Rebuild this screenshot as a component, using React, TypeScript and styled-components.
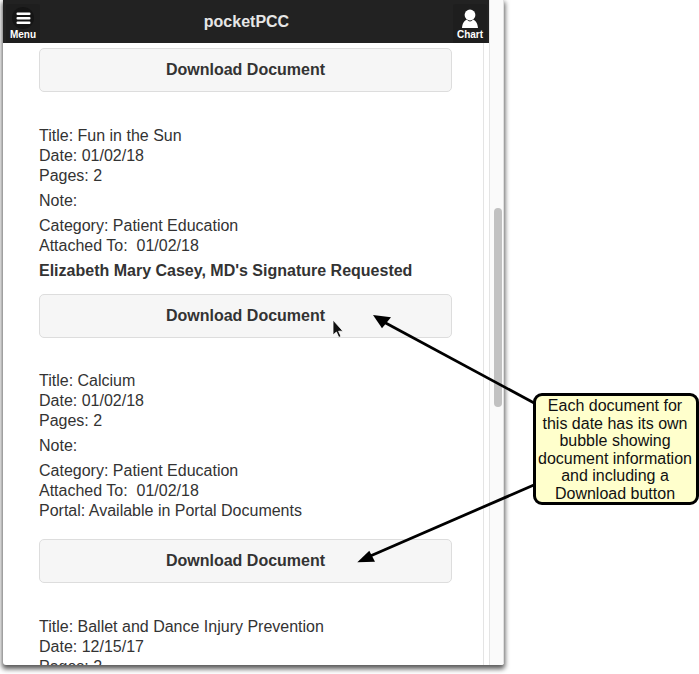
import React from "react";
import styled, { createGlobalStyle } from "styled-components";

const GlobalStyle = createGlobalStyle`
  html, body { margin: 0; padding: 0; background: #fff; }
  body { font-family: "Liberation Sans", Arial, sans-serif; color: #333; }
`;

const Page = styled.div`
  position: relative;
  width: 699px;
  height: 674px;
  overflow: hidden;
  padding: 0 0 0 3px;
  box-sizing: border-box;
`;

const Phone = styled.div`
  width: 501px;
  height: 665px;
  display: flex;
  flex-direction: column;
  background: #fff;
  box-shadow: 0 3px 5px 1px rgba(0, 0, 0, 0.65);
  border-radius: 0 0 3px 3px;
  overflow: hidden;
`;

const Screen = styled.div`
  flex: 1;
  min-height: 0;
  display: flex;
`;

const Main = styled.div`
  width: 487px;
  display: flex;
  flex-direction: column;
  flex-shrink: 0;
`;

const Header = styled.header`
  height: 43px;
  flex-shrink: 0;
  background: #222;
  display: flex;
  align-items: flex-end;
  justify-content: space-between;
  padding: 0 3px;
`;

const HeaderButton = styled.div`
  width: 34px;
  height: 39px;
  background: #1e1e1e;
  border-radius: 3px 3px 0 0;
  color: #fff;
  font-size: 10px;
  font-weight: bold;
  line-height: 11px;
  text-align: center;
  display: flex;
  flex-direction: column;
  align-items: center;
  justify-content: flex-end;
  padding-bottom: 3px;
  box-sizing: border-box;
`;

const IconDisc = styled.span`
  width: 22px;
  height: 22px;
  border-radius: 50%;
  background: #151515;
  display: flex;
  align-items: center;
  justify-content: center;
  margin-bottom: 0;
`;

const HeaderTitle = styled.h1`
  margin: 0 0 10px;
  font-size: 16px;
  line-height: 22px;
  font-weight: bold;
  color: #e6e6e6;
`;

const Content = styled.div`
  flex: 1;
  min-height: 0;
  overflow: hidden;
  border-right: 1px solid #e4e4e4;
  width: 481px;
  padding: 5px 0 0 36px;
  box-sizing: border-box;
`;

const DownloadButton = styled.button`
  display: block;
  width: 413px;
  height: 44px;
  padding: 0 0 1px;
  background: #f6f6f6;
  border: 1px solid #ddd;
  border-radius: 5px;
  font: bold 16px "Liberation Sans", Arial, sans-serif;
  color: #333;
`;

const Doc = styled.section<{ $top: number; $bottom: number }>`
  width: 413px;
  margin-top: ${(p) => p.$top}px;
  margin-bottom: ${(p) => p.$bottom}px;
  font-size: 16px;
  line-height: 20px;
`;

const Line = styled.div`
  white-space: pre;
`;

const Group = styled.div`
  margin: 5px 0;
`;

const Strong = styled.div`
  margin-top: 5px;
  font-weight: bold;
`;

const Gutter = styled.div`
  flex: 1;
  position: relative;
  background: #fafafa;
  margin-left: -1px;
  border-left: 1px solid #e4e4e4;
  border-right: 1px solid #e0e0e0;
`;

const Thumb = styled.div`
  position: absolute;
  top: 208px;
  right: 1px;
  width: 8px;
  height: 199px;
  background: #c1c1c1;
  border-radius: 4px;
`;

const Overlay = styled.svg`
  position: absolute;
  inset: 0;
  pointer-events: none;
`;

const Callout = styled.div`
  position: absolute;
  left: 533px;
  top: 393px;
  width: 166px;
  height: 112px;
  box-sizing: border-box;
  background: #ffffcc;
  border: 3px solid #000;
  border-radius: 9px;
  font-size: 16px;
  line-height: 17.5px;
  color: #111;
  text-align: center;
  padding: 1px 2px 0 0;
`;

type DocInfo = {
  title: string;
  date: string;
  pages: string;
  rest: string[];
  signature?: string;
  top: number;
  bottom: number;
};

const docs: DocInfo[] = [
  {
    title: "Fun in the Sun",
    date: "01/02/18",
    pages: "2",
    rest: ["Category: Patient Education", "Attached To:  01/02/18"],
    signature: "Elizabeth Mary Casey, MD's Signature Requested",
    top: 34,
    bottom: 13,
  },
  {
    title: "Calcium",
    date: "01/02/18",
    pages: "2",
    rest: ["Category: Patient Education", "Attached To:  01/02/18", "Portal: Available in Portal Documents"],
    top: 33,
    bottom: 18,
  },
];

const Document: React.FC<{ doc: DocInfo }> = ({ doc }) => (
  <>
    <Doc $top={doc.top} $bottom={doc.bottom}>
      <Line>Title: {doc.title}</Line>
      <Line>Date: {doc.date}</Line>
      <Line>Pages: {doc.pages}</Line>
      <Group>Note:</Group>
      {doc.rest.map((r) => (
        <Line key={r}>{r}</Line>
      ))}
      {doc.signature && <Strong>{doc.signature}</Strong>}
    </Doc>
    <DownloadButton>Download Document</DownloadButton>
  </>
);

const App: React.FC = () => (
  <Page>
    <GlobalStyle />
    <Phone>
      <Screen>
        <Main>
          <Header>
            <HeaderButton>
              <IconDisc>
                <svg width="15" height="13" viewBox="0 0 15 13">
                  <rect x="0.5" y="0.5" width="14" height="2.6" rx="1" fill="#fff" />
                  <rect x="0.5" y="5" width="14" height="2.6" rx="1" fill="#fff" />
                  <rect x="0.5" y="9.5" width="14" height="2.6" rx="1" fill="#fff" />
                </svg>
              </IconDisc>
              Menu
            </HeaderButton>
            <HeaderTitle>pocketPCC</HeaderTitle>
            <HeaderButton>
              <svg width="20" height="20" viewBox="0 0 20 20">
                <circle cx="10" cy="6" r="5.4" fill="#fff" />
                <path d="M7 10.5 C4 12 2.5 14 2 19 H18 C17.5 14 16 12 13 10.5 C11.5 13 8.5 13 7 10.5 Z" fill="#fff" />
              </svg>
              Chart
            </HeaderButton>
          </Header>
          <Content>
            <DownloadButton>Download Document</DownloadButton>
            <Document doc={docs[0]} />
            <Document doc={docs[1]} />
            <Doc $top={34} $bottom={0}>
              <Line>Title: Ballet and Dance Injury Prevention</Line>
              <Line>Date: 12/15/17</Line>
              <Line>Pages: 2</Line>
            </Doc>
          </Content>
        </Main>
        <Gutter>
          <Thumb />
        </Gutter>
      </Screen>
    </Phone>
    <Overlay width="699" height="674" viewBox="0 0 699 674">
      <line x1="536" y1="404" x2="382" y2="321" stroke="#000" strokeWidth="2.8" />
      <polygon points="373,315 391,317.3 382,328.3" fill="#000" />
      <line x1="535" y1="484.5" x2="368" y2="557" stroke="#000" strokeWidth="2.8" />
      <polygon points="357.3,562.3 369.3,550.7 375,561.7" fill="#000" />
      <path
        d="M333 320 V335 L336.4 332 L338.8 337.4 L341 336.4 L338.6 331.2 H343 Z"
        fill="#111"
        stroke="#fff"
        strokeWidth="0.8"
      />
    </Overlay>
    <Callout>
      Each document for
      <br />
      this date has its own
      <br />
      bubble showing
      <br />
      document information
      <br />
      and including a
      <br />
      Download button
    </Callout>
  </Page>
);

export default App;
